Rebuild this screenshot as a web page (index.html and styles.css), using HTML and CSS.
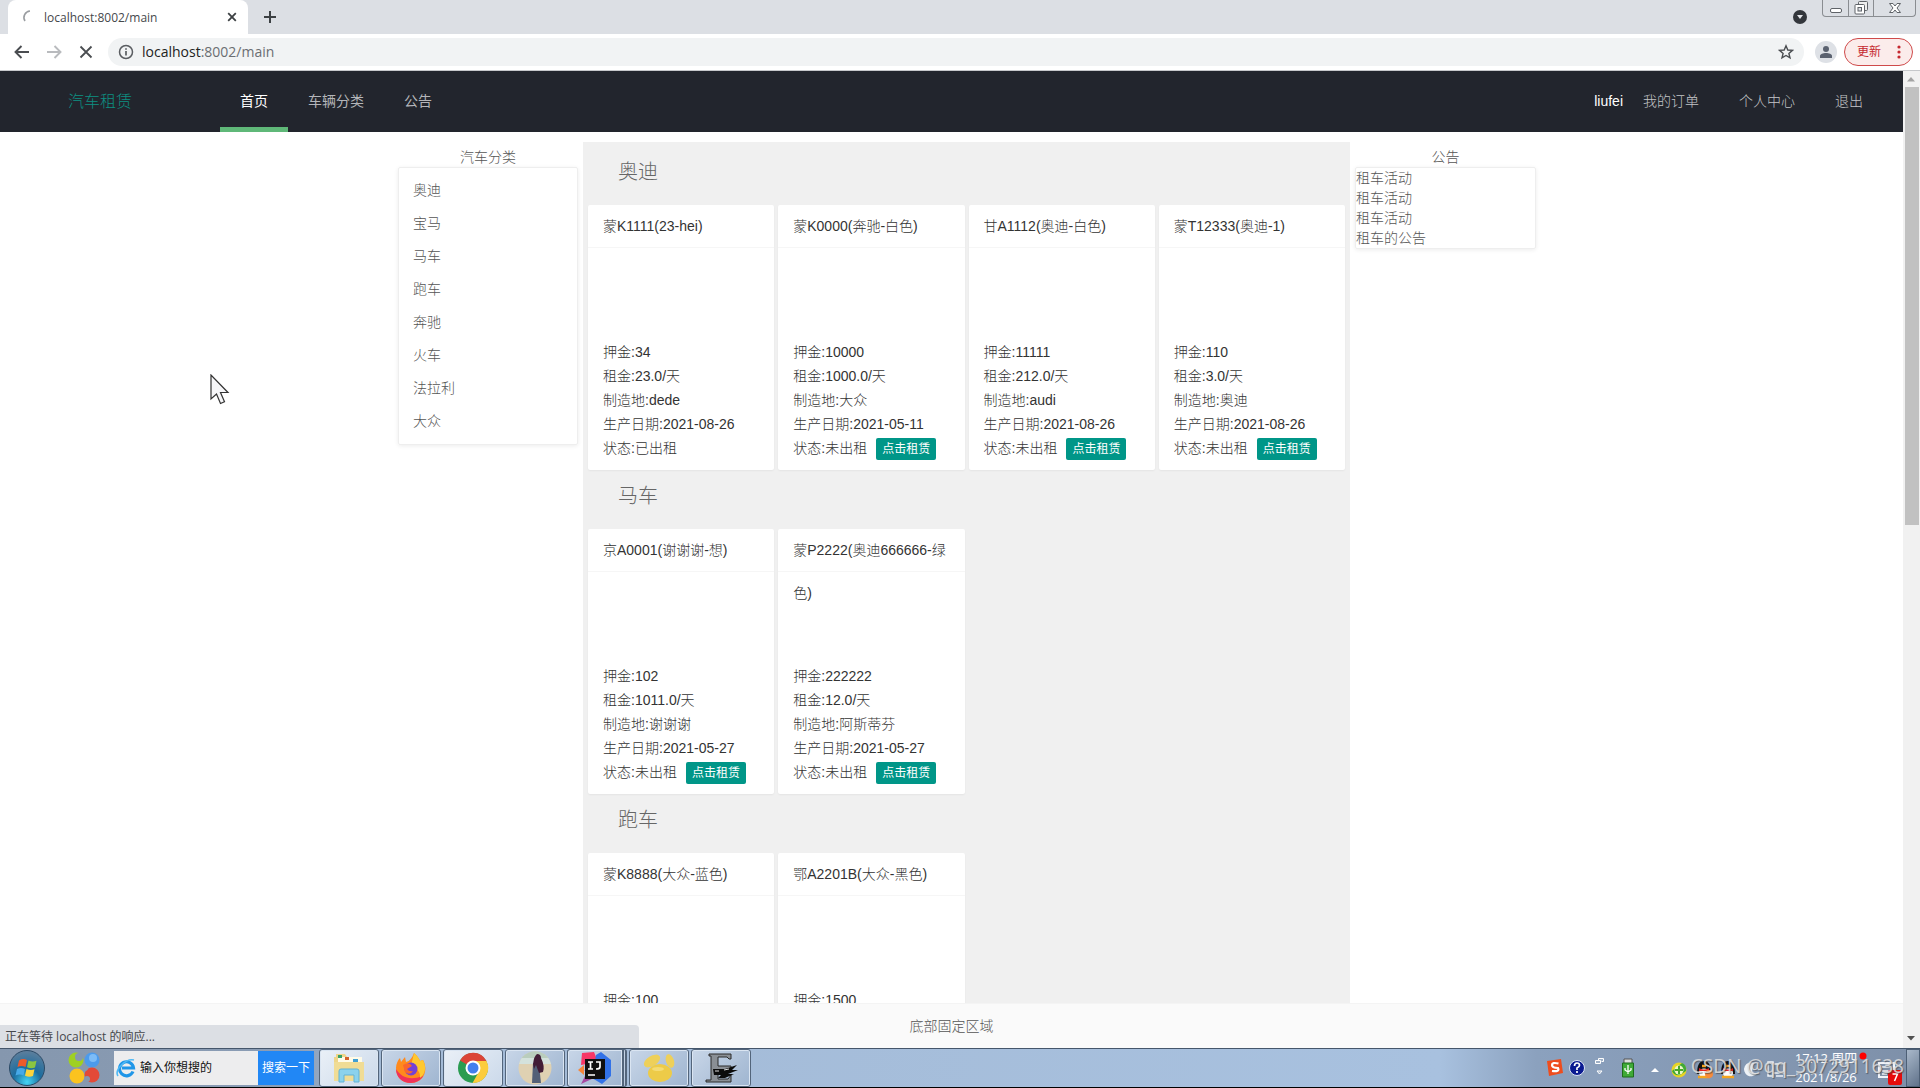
FILE: index.html
```html
<!DOCTYPE html>
<html lang="zh-CN">
<head>
<meta charset="utf-8">
<title>localhost:8002/main</title>
<link rel="stylesheet" href="styles.css">
</head>
<body>
<div class="tabstrip">
  <div class="tab">
    <svg class="spinner" width="18" height="18" viewBox="0 0 18 18"><path d="M11 3A6.5 6.5 0 0 0 6 13" fill="none" stroke="#9a9da1" stroke-width="1.6"/></svg>
    <span class="tab-title">localhost:8002/main</span>
    <button class="icon-btn" aria-label="关闭标签页"><svg width="10" height="10" viewBox="0 0 10 10"><path d="M1.200 1.200l7.600 7.600M8.800 1.200l-7.600 7.600" stroke="#3c4043" stroke-width="1.800"/></svg></button>
  </div>
  <button class="icon-btn new-tab" aria-label="新标签页"><svg width="14" height="14" viewBox="0 0 14 14"><path d="M7 1v12M1 7h12" stroke="#3c4043" stroke-width="2"/></svg></button>
  <button class="icon-btn tab-search" aria-label="搜索标签页"><svg width="14" height="14" viewBox="0 0 14 14"><circle cx="7" cy="7" r="7" fill="#33363b"/><path d="M4 5h6l-3 4z" fill="#e4e6ea"/></svg></button>
  <div class="window-buttons">
    <button class="win-btn" aria-label="最小化"><svg width="14" height="14" viewBox="0 0 14 14"><rect x="1.500" y="7.500" width="11" height="4" rx="1.500" fill="#fff" stroke="#5f6368"/></svg></button>
    <button class="win-btn" aria-label="还原"><svg width="14" height="14" viewBox="0 0 14 14"><path d="M4.500 3.500v-2a1 1 0 0 1 1-1h7a1 1 0 0 1 1 1v7a1 1 0 0 1-1 1h-2" fill="#eee" stroke="#5f6368"/><rect x="1" y="3.500" width="9.500" height="9.500" rx="1" fill="#fff" stroke="#5f6368"/><rect x="4" y="6.500" width="3.500" height="3.500" fill="#dee1e6" stroke="#5f6368"/></svg></button>
    <button class="win-btn win-close" aria-label="关闭"><svg width="14" height="14" viewBox="0 0 14 14"><path d="M1.500 2.500h3.500l2 2.500 2-2.500h3.500L9 7l3.500 4.500H9L7 9l-2 2.500H1.500L5 7z" fill="#fff" stroke="#5f6368"/></svg></button>
  </div>
</div>
<div class="toolbar">
  <button class="icon-btn nav-btn" aria-label="后退"><svg width="16" height="14" viewBox="0 0 16 14"><path d="M15 7H2M7.500 1L1.500 7l6 6" fill="none" stroke="#4a4d51" stroke-width="1.900"/></svg></button>
  <button class="icon-btn nav-btn" aria-label="前进"><svg width="16" height="14" viewBox="0 0 16 14"><path d="M1 7h13M8.500 1l6 6-6 6" fill="none" stroke="#b9bbbe" stroke-width="1.900"/></svg></button>
  <button class="icon-btn nav-btn" aria-label="停止"><svg width="14" height="14" viewBox="0 0 14 14"><path d="M1.500 1.500l11 11M12.500 1.500l-11 11" stroke="#4a4d51" stroke-width="1.800"/></svg></button>
  <div class="omnibox">
    <svg width="16" height="16" viewBox="0 0 16 16"><circle cx="8" cy="8" r="6.500" fill="none" stroke="#5a5d61" stroke-width="1.500"/><path d="M8 7v4.500M8 4.200v1.600" stroke="#5a5d61" stroke-width="1.700"/></svg>
    <span class="url"><span class="host">localhost</span>:8002/main</span>
    <button class="icon-btn" aria-label="收藏"><svg width="16" height="16" viewBox="0 0 16 16"><path d="M8 1.800l1.800 4.200 4.600.4-3.500 3 1.100 4.500-4-2.400-4 2.400 1.100-4.500-3.500-3 4.600-.4z" fill="none" stroke="#4a4d51" stroke-width="1.400"/></svg></button>
  </div>
  <button class="icon-btn" aria-label="用户"><svg width="22" height="22" viewBox="0 0 22 22"><circle cx="11" cy="11" r="11" fill="#dee1e6"/><circle cx="11" cy="8" r="3" fill="#5b6270"/><path d="M5 17v-2c0-2 3-3 6-3s6 1 6 3v2z" fill="#5b6270"/></svg></button>
  <button class="update-btn">更新<svg width="4" height="14" viewBox="0 0 4 14"><circle cx="2" cy="2" r="1.600" fill="#c5282f"/><circle cx="2" cy="7" r="1.600" fill="#c5282f"/><circle cx="2" cy="12" r="1.600" fill="#c5282f"/></svg></button>
</div>

<div class="viewport">
  <div class="page">
    <header class="site-header">
      <a class="logo" href="#">汽车租赁</a>
      <nav class="site-nav">
        <a class="nav-item active" href="#">首页</a>
        <a class="nav-item" href="#">车辆分类</a>
        <a class="nav-item" href="#">公告</a>
      </nav>
      <nav class="user-nav">
        <span class="user-name">liufei</span>
        <a class="nav-item" href="#">我的订单</a>
        <a class="nav-item" href="#">个人中心</a>
        <a class="nav-item" href="#">退出</a>
      </nav>
    </header>
    <div class="columns">
      <aside class="side side-left">
        <h2 class="side-title">汽车分类</h2>
        <ul class="panel categories">
          <li><a href="#">奥迪</a></li><li><a href="#">宝马</a></li><li><a href="#">马车</a></li><li><a href="#">跑车</a></li><li><a href="#">奔驰</a></li><li><a href="#">火车</a></li><li><a href="#">法拉利</a></li><li><a href="#">大众</a></li>
        </ul>
      </aside>
      <main class="listing">
        <section>
          <h2 class="group-title">奥迪</h2>
          <div class="cards">
            <article class="card"><h3>蒙K1111(23-hei)</h3><div class="info"><p>押金:34</p><p>租金:23.0/天</p><p>制造地:dede</p><p>生产日期:2021-08-26</p><p class="state">状态:已出租</p></div></article>
            <article class="card"><h3>蒙K0000(奔驰-白色)</h3><div class="info"><p>押金:10000</p><p>租金:1000.0/天</p><p>制造地:大众</p><p>生产日期:2021-05-11</p><p class="state">状态:未出租<button class="rent">点击租赁</button></p></div></article>
            <article class="card"><h3>甘A1112(奥迪-白色)</h3><div class="info"><p>押金:11111</p><p>租金:212.0/天</p><p>制造地:audi</p><p>生产日期:2021-08-26</p><p class="state">状态:未出租<button class="rent">点击租赁</button></p></div></article>
            <article class="card"><h3>蒙T12333(奥迪-1)</h3><div class="info"><p>押金:110</p><p>租金:3.0/天</p><p>制造地:奥迪</p><p>生产日期:2021-08-26</p><p class="state">状态:未出租<button class="rent">点击租赁</button></p></div></article>
          </div>
        </section>
        <section>
          <h2 class="group-title">马车</h2>
          <div class="cards">
            <article class="card"><h3>京A0001(谢谢谢-想)</h3><div class="info"><p>押金:102</p><p>租金:1011.0/天</p><p>制造地:谢谢谢</p><p>生产日期:2021-05-27</p><p class="state">状态:未出租<button class="rent">点击租赁</button></p></div></article>
            <article class="card"><h3>蒙P2222(奥迪666666-绿色)</h3><div class="info"><p>押金:222222</p><p>租金:12.0/天</p><p>制造地:阿斯蒂芬</p><p>生产日期:2021-05-27</p><p class="state">状态:未出租<button class="rent">点击租赁</button></p></div></article>
          </div>
        </section>
        <section>
          <h2 class="group-title">跑车</h2>
          <div class="cards">
            <article class="card"><h3>蒙K8888(大众-蓝色)</h3><div class="info"><p>押金:100</p></div></article>
            <article class="card"><h3>鄂A2201B(大众-黑色)</h3><div class="info"><p>押金:1500</p></div></article>
          </div>
        </section>
      </main>
      <aside class="side side-right">
        <h2 class="side-title">公告</h2>
        <ul class="panel notices">
          <li><a href="#">租车活动</a></li><li><a href="#">租车活动</a></li><li><a href="#">租车活动</a></li><li><a href="#">租车的公告</a></li>
        </ul>
      </aside>
    </div>
    <footer class="site-footer">底部固定区域</footer>
  </div>
  <div class="scrollbar">
    <svg width="16" height="16" viewBox="0 0 16 16"><path d="M4 10.500h8L8 6z" fill="#a3a3a3"/></svg>
    <div class="track"><div class="thumb"></div></div>
    <svg width="16" height="20" viewBox="0 0 16 20"><path d="M4 8h8l-4 4.500z" fill="#505050"/></svg>
  </div>
  <div class="status">正在等待 localhost 的响应...</div>
  <svg class="cursor" width="20" height="32" viewBox="0 0 20 32"><path d="M1 1v24l5.500-5 4 9.500 4-1.700-4-9.300H18z" fill="#f6f6f8" stroke="#333" stroke-width="1.200"/></svg>
</div>

<div class="taskbar">
  <button class="start" aria-label="开始"><svg width="36" height="36" viewBox="0 0 36 36"><defs><radialGradient id="orb" cx=".5" cy=".9" r=".9"><stop offset="0" stop-color="#45d5f5"/><stop offset=".45" stop-color="#1b6d9f"/><stop offset="1" stop-color="#5f7f9c"/></radialGradient></defs><circle cx="18" cy="18" r="17.500" fill="url(#orb)" stroke="#2c4a66"/><path d="M10 10.500q4-2.500 8-.5l-1.500 7q-4-2-8 0z" fill="#ee5a2a"/><path d="M19.500 10.500q4 2 8 .3L26 17.500q-4 1.500-8-.3z" fill="#8ac541"/><path d="M8 19q4-2 8 0l-1.500 6.500q-4-2-8 0z" fill="#47a9e8"/><path d="M17.500 19q4 2 8 .3L24 26q-4 1.500-8-.3z" fill="#fcd33c"/></svg></button>
  <button class="start" aria-label="浏览"><svg width="32" height="32" viewBox="0 0 32 32"><circle cx="8" cy="8" r="7.500" fill="#9fd022"/><circle cx="24" cy="8" r="7.500" fill="#4c9bec"/><circle cx="9" cy="24" r="7.500" fill="#fbc31f"/><circle cx="24" cy="23" r="7.500" fill="#e34a38"/><circle cx="11" cy="5" r="4" fill="#8798ae"/><circle cx="19" cy="27" r="3" fill="#8798ae"/><circle cx="25" cy="6" r="4" fill="#7dbcf6"/><circle cx="17" cy="16" r="3" fill="#8798ae"/></svg></button>
  <form class="search">
    <svg width="20" height="20" viewBox="0 0 20 20"><path d="M17 13.500A7 7 0 1 1 17.500 10H6" fill="none" stroke="#1f96e8" stroke-width="3.200"/><path d="M2 18C-2 12 10 0 18 2" fill="none" stroke="#4fb9f5" stroke-width="1.600"/></svg>
    <input type="text" value="输入你想搜的" aria-label="搜索">
    <button type="button">搜索一下</button>
  </form>
  <div class="apps">
    <button class="app lit" aria-label="文件夹"><svg width="34" height="32" viewBox="0 0 34 32"><path d="M2 5h2V2h9l2 3h15v24H2z" fill="#eed58a"/><path d="M6 5h24v5H6z" fill="#fffbe8"/><path d="M6 3h4v3H6z" fill="#38a169"/><path d="M13 5h4v3h-4z" fill="#d4622c"/><path d="M21 7h5v3h-5z" fill="#3f9fd4"/><path d="M2 10h30v19H2z" fill="#f0dc95"/><path d="M7 30V19q0-2 2-2h16q2 0 2 2v11h-5v-7H12v7z" fill="#8bd2ed" stroke="#63b3d5"/></svg></button>
    <button class="app" aria-label="Firefox"><svg width="32" height="32" viewBox="0 0 32 32"><path d="M16 31C7 31 1 25 1 16c0-4 2-8 4-10l1 4 4-5 1 5c4-1 6-4 8-9 3 3 5 5 6 8l3-1c6 11 0 23-12 23z" fill="#ff8a1d"/><path d="M16 31C7 31 1 25 1 17c5 8 13 12 27 7-2 4-7 7-12 7z" fill="#f0325a"/><path d="M19 1c3 3 5 5 6 8l3-1c4 8 2 14-3 18 1-8-6-11-9-12z" fill="#ffc82f"/><circle cx="16" cy="17" r="6.500" fill="#7542d5"/><path d="M8 13q6-4 9 1l-5 3q2 3 6 2-3 5-8 1z" fill="#fb662b"/></svg></button>
    <button class="app lit" aria-label="Chrome"><svg width="32" height="32" viewBox="0 0 32 32"><circle cx="16" cy="16" r="15" fill="#2a9c51"/><path d="M16 16L3 8.500A15 15 0 0 1 29.500 9z" fill="#db4437"/><path d="M16 9h13.400A15 15 0 0 1 15.500 31L22 19.500z" fill="#fccc3d"/><circle cx="16" cy="16" r="7.500" fill="#fff"/><circle cx="16" cy="16" r="5.500" fill="#427fed"/></svg></button>
    <button class="app" aria-label="照片"><svg width="34" height="34" viewBox="0 0 34 34"><clipPath id="round"><circle cx="17" cy="17" r="16.500"/></clipPath><g clip-path="url(#round)"><path d="M0 0h34v34H0z" fill="#dfd1b2"/><path d="M0 0h34v7H0z" fill="#b9cdbd"/><path d="M0 7h34v6H0z" fill="#d4e2dc"/><path d="M15 12l-1 20h9l-2-18z" fill="#536077"/><path d="M19 3q4 0 4 4 4 8 2 14l-4 1-3-8-2 4-1-5q1-8 4-10z" fill="#421d36"/></g></svg></button>
    <button class="app stacked" aria-label="IntelliJ IDEA"><svg width="34" height="32" viewBox="0 0 34 32"><path d="M4 1l12-1 4 10L3 13z" fill="#f73767"/><path d="M2 15l7 5-6 12 13-6z" fill="#a64aa2"/><path d="M18 3l5-3 10 8v16l-9 8-10-6z" fill="#3272e8"/><path d="M0 18l6-5v10z" fill="#f78539"/><path d="M7 7h20v20H7z" fill="#101010"/><path d="M10 10h5M12.500 10v7M10 17h5M18 10h4v5q0 2-4 2M10 23h7" fill="none" stroke="#fff" stroke-width="1.700"/></svg></button>
    <button class="app" aria-label="Navicat"><svg width="34" height="32" viewBox="0 0 34 32"><g fill="#eed05a"><ellipse cx="10" cy="9" rx="9" ry="5" transform="rotate(-32 10 9)"/><ellipse cx="28" cy="9" rx="4" ry="7" transform="rotate(-18 28 9)"/><ellipse cx="18" cy="21" rx="12" ry="9" fill="#edcb48"/></g><ellipse cx="16" cy="17" rx="6" ry="2" fill="#f4dc74"/></svg></button>
    <button class="app" aria-label="EditPlus"><svg width="34" height="32" viewBox="0 0 34 32"><path d="M5 2h22v5h-2l-2-2h-9v9h13v4H14v9h10l3-4v7H2v-2h5V4H5z" fill="#8a8f95" stroke="#2a2a2a"/><path d="M9 17h12l12-4-5 5h6l-10 4h6l-9 4h-7l3-3h-7z" fill="#0c0c0c"/><path d="M11 19h4M20 18l5-1" stroke="#ddd"/></svg></button>
  </div>
  <div class="tray">
    <svg width="22" height="22" viewBox="0 0 22 22"><path d="M3 4l14-2 2 14-14 3z" fill="#ee4d1e"/><path d="M14.500 6.500Q8 5 8 8t6 3q2 4-6 3" fill="none" stroke="#fff" stroke-width="2.200"/></svg>
    <svg width="22" height="22" viewBox="0 0 22 22"><circle cx="11" cy="11" r="7.500" fill="#0a1a91" stroke="#dbe4f5"/><path d="M8.500 9q0-3 2.500-3t2.500 2.300Q13.500 10 11 11v2M11 14v2" fill="none" stroke="#fff" stroke-width="1.700"/></svg>
    <svg width="22" height="22" viewBox="0 0 22 22"><path d="M10.500 3.500V1.500h5v3h-2M7.500 3.500h5v3h-5zM9 14h5l-2.500 3z" fill="#9fb0c6" stroke="#fff"/></svg>
    <svg width="36" height="22" viewBox="0 0 36 22"><path d="M14 2h8v5h-8z" fill="#ddd" stroke="#555"/><path d="M12.500 6h11v14h-11z" fill="#3faa36" stroke="#1d6b1b"/><path d="M18 17V8M15 11v2l3 2 3-2v-2" fill="none" stroke="#fff" stroke-width="1.300"/></svg>
    <svg width="18" height="22" viewBox="0 0 18 22"><path d="M5 15h8l-4-4z" fill="#fff"/></svg>
    <svg width="28" height="22" viewBox="0 0 28 22"><circle cx="15" cy="13" r="7.500" fill="#e8d425"/><path d="M8 14q2 5 8 4l6-4q1-6-4-8z" fill="#41a936"/><circle cx="15" cy="13" r="4.500" fill="#eef7c9"/><path d="M15 9v8M11 13h8" stroke="#47a829" stroke-width="2"/></svg>
    <svg width="24" height="22" viewBox="0 0 24 22"><path d="M5 17Q5 4 12 4t7 13z" fill="#111"/><ellipse cx="12" cy="16" rx="5" ry="4.500" fill="#fff"/><path d="M7 11q5 3 10 0v3H7z" fill="#e32420"/><path d="M6 20h12M10 9h4" stroke="#f5a51d" stroke-width="2.500"/><circle cx="17" cy="17" r="4" fill="#f78b3b"/></svg>
    <svg width="24" height="22" viewBox="0 0 24 22"><path d="M5 17Q5 4 12 4t7 13z" fill="#111"/><ellipse cx="12" cy="16" rx="5" ry="4.500" fill="#fff"/><path d="M7 11q5 3 10 0v3H7z" fill="#e32420"/><path d="M6 20h12M10 9h4" stroke="#f5a51d" stroke-width="2.500"/></svg>
    <svg width="24" height="22" viewBox="0 0 24 22"><path d="M14 6a7 7 0 1 0 3 10q-8 1-3-10z" fill="#eef2f7"/></svg>
    <svg width="24" height="22" viewBox="0 0 24 22"><path d="M4 5h5v14H4zM9 7h11v9H9zM12 19h7" fill="#7f90a7" stroke="#eef2f7" stroke-width="1.500"/></svg>
    <div class="clock"><span>17:12 周四</span><span>2021/8/26</span></div>
    <svg width="46" height="36" viewBox="0 0 46 36"><circle cx="7" cy="6" r="3.500" fill="#f00"/><path d="M23 13h15v14H23z" fill="#8090a6" stroke="#f0f3f8" stroke-width="2"/><path d="M26 17h8M26 21h8M26 24h5" stroke="#f0f3f8" stroke-width="1.500"/><rect x="32" y="20" width="14" height="15" rx="2" fill="#e60b0b"/><path d="M36.500 24h5l-3 7" fill="none" stroke="#fff" stroke-width="1.500"/></svg>
  </div>
  <button class="show-desktop" aria-label="显示桌面"></button>
  <span class="watermark">CSDN @qq_3072911638</span>
</div>
</body>
</html>
```
FILE: styles.css
```css
* { box-sizing: border-box; }
body {
  margin: 0;
  height: 100vh;
  display: flex;
  flex-direction: column;
  overflow: hidden;
  background: #fff;
  color: #333;
  font: 300 14px/24px "Liberation Sans", "Noto Sans CJK SC", sans-serif;
}
h2, h3, p, ul { margin: 0; padding: 0; font-weight: 300; }
ul { list-style: none; }
a { color: inherit; text-decoration: none; }
button, input { margin: 0; padding: 0; border: 0; background: none; font: inherit; color: inherit; }
svg { display: block; flex: none; }
.icon-btn { display: flex; align-items: center; justify-content: center; }

/* browser chrome */
.tabstrip { display: flex; align-items: center; height: 34px; flex: none; padding: 0 4px 0 8px; background: #dcdfe4; }
.tab { display: flex; align-items: center; width: 240px; height: 34px; padding: 0 11px; border-radius: 8px 8px 0 0; background: #fff; }
.spinner { margin-right: 7px; }
.tab-title { flex: 1; padding-top: 2px; font: 400 12px/16px "Open Sans", sans-serif; color: #45484c; }
.new-tab { margin-left: 15px; }
.tab-search { margin-left: auto; }
.window-buttons { display: flex; align-self: flex-start; margin-left: 15px; border: 1px solid #8a8d91; border-top: 0; border-radius: 0 0 4px 4px; }
.win-btn { display: flex; align-items: center; justify-content: center; width: 25px; height: 16px; }
.win-btn + .win-btn { border-left: 1px solid #8a8d91; }
.win-close { width: 42px; }
.toolbar { display: flex; align-items: center; height: 37px; flex: none; padding: 0 7px 0 6px; border-bottom: 1px solid #c6c8cb; background: #fff; }
.nav-btn { width: 32px; height: 32px; }
.omnibox { display: flex; flex: 1; align-items: center; height: 28px; margin: 0 11px 0 6px; padding: 0 10px; border-radius: 14px; background: #f1f3f4; }
.url { flex: 1; margin-left: 8px; font: 400 14px/20px "Open Sans", sans-serif; color: #6b6e72; }
.host { color: #222; }
.update-btn { display: flex; align-items: center; gap: 16px; height: 28px; margin-left: 7px; padding: 0 11px 0 12px; border: 1px solid #cf4a4a; border-radius: 14px; background: #fbeceb; color: #c5282f; font-size: 12px; font-weight: 400; }

/* web page */
.viewport { position: relative; display: flex; flex: 1; min-height: 0; }
.page { display: flex; flex: 1; flex-direction: column; min-width: 0; }
.site-header { display: flex; flex: none; height: 61px; padding: 0 20px 0 68px; background: #22252d; color: #b4b5b9; line-height: 61px; font-weight: 400; }
.logo { width: 152px; color: #0d9082; font-size: 16px; font-weight: 300; }
.site-nav, .user-nav { display: flex; }
.user-nav { margin-left: auto; color: #c4c5c8; font-weight: 300; }
.nav-item { padding: 0 20px; }
.active { border-bottom: 5px solid #5fb878; color: #fff; }
.user-name { color: #fff; }
.columns { display: grid; flex: 1; grid-template-columns: 393fr 190fr 767fr 191fr 362fr; min-height: 0; overflow: hidden; padding-top: 10px; }
.side { padding: 5px 5px 0; }
.side-left { grid-column: 2; }
.side-title { font-size: 14px; line-height: 20px; color: #555; text-align: center; }
.panel { border: 1px solid #eee; border-radius: 2px; color: #555; box-shadow: 0 1px 4px rgba(0, 0, 0, .08); }
.categories { padding: 6px 14px; line-height: 33px; }
.notices { line-height: 20px; }
.listing { padding: 4px 5px; background: #f0f0f0; }
.group-title { height: 59px; padding: 10px 30px; font-size: 20px; line-height: 32px; color: #666; }
.cards { display: grid; grid-template-columns: repeat(4, minmax(0, 1fr)); gap: 4px; }
.card { height: 265px; display: flex; flex-direction: column; border-radius: 2px; background: #fff; box-shadow: 0 1px 2px rgba(0, 0, 0, .05); }
.card h3 { flex: none; height: 43px; padding: 0 15px; border-bottom: 1px solid #f6f6f6; font-size: 14px; line-height: 43px; }
.info { padding: 92px 15px 10px; }
.state { display: flex; align-items: center; }
.rent { width: 60px; height: 22px; margin: 2px 0 0 9px; border-radius: 2px; background: #009688; color: #fff; font-size: 12px; font-weight: 400; line-height: 22px; }
.site-footer { flex: none; height: 45px; border-top: 1px solid #f4f4f4; background: #fafafa; color: #555; line-height: 44px; text-align: center; }
.scrollbar { display: flex; flex-direction: column; width: 17px; flex: none; background: #f1f1f1; }
.track { flex: 1; padding: 0 1px 0 2px; }
.thumb { height: 438px; background: #c1c1c1; }
.status { position: absolute; left: 0; bottom: 0; width: 639px; height: 23px; padding-left: 5px; border-radius: 0 4px 0 0; background: #dcdfe4; color: #45484c; font: 400 12px/24px "Open Sans", "Noto Sans CJK SC", sans-serif; }
.cursor { position: absolute; left: 210px; top: 303px; }

/* desktop taskbar */
.taskbar { position: relative; display: flex; flex: none; align-items: center; height: 40px; border-top: 1px solid #45566b; border-bottom: 1px solid #000; background: linear-gradient(90deg, #8597ae 0, #8b9db5 15%, #a3bad6 20%, #a8c1df 75%, #8ba1be 80%, #7e90a9 100%); }
.start { margin-left: 9px; }
.start + .start { margin-left: 23px; }
.search { display: flex; align-items: center; width: 200px; height: 34px; margin-left: 14px; padding-left: 2px; background: #ededee; }
.search input { flex: 1; min-width: 0; margin-left: 4px; color: #111; font-size: 12px; font-weight: 400; }
.search button { width: 56px; height: 34px; background: #2187f5; color: #fff; font-size: 12px; font-weight: 400; }
.apps { display: flex; gap: 2px; margin-left: 5px; }
.app { display: flex; align-items: center; justify-content: center; width: 60px; height: 38px; border: 1px solid #53657b; border-radius: 3px; background: linear-gradient(135deg, #c8d6e8, #9fb5d0); box-shadow: inset 0 0 0 1px #dae5f2; }
.lit { background: linear-gradient(135deg, #eaf0f7, #cbd9ea); }
.stacked { border-right: 5px double #53657b; }
.tray { display: flex; align-items: center; margin-left: auto; }
.clock { display: flex; flex-direction: column; align-items: center; width: 60px; margin-left: 8px; color: #fff; font: 400 13px/19px "Open Sans", "Noto Sans CJK SC", sans-serif; white-space: nowrap; }
.show-desktop { width: 14px; height: 38px; margin-left: 4px; border: 1px solid #4d5f75; background: linear-gradient(135deg, #a9b8ca, #60728a); }
.watermark { position: absolute; right: 16px; top: 4px; color: rgba(225, 225, 225, .85); font: 400 19px/26px "Noto Sans", sans-serif; text-shadow: 1px 1px 1px rgba(60, 60, 60, .6); white-space: nowrap; }
```
